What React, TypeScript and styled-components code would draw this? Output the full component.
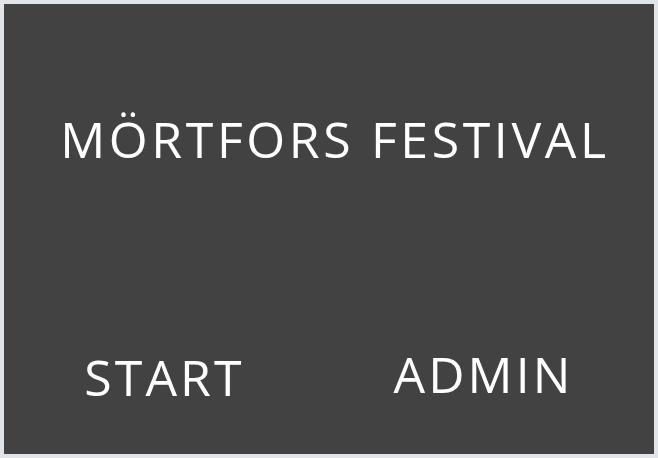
import styled, { createGlobalStyle } from "styled-components";

const GlobalStyle = createGlobalStyle`
  html, body {
    margin: 0;
    padding: 0;
    background: #e1e4e9;
  }
  body {
    padding: 4px;
    font-family: "Open Sans", "DejaVu Sans", sans-serif;
  }
`;

const Panel = styled.main`
  box-sizing: border-box;
  width: 650px;
  height: 450px;
  background: #424242;
  color: #ffffff;
  display: grid;
  grid-template-rows: 267px 1fr;
`;

const Title = styled.h1`
  margin: 0;
  padding-top: 105px;
  text-align: center;
  font-size: 50px;
  font-weight: 400;
  letter-spacing: 3.6px;
  line-height: 1.2;
  padding-left: 12px;
`;

const ButtonRow = styled.nav`
  display: grid;
  grid-template-columns: 1fr 1fr;
  align-items: start;
`;

const NavButton = styled.button<{ $offset?: number; $shift?: number }>`
  background: none;
  border: none;
  color: #ffffff;
  font-family: inherit;
  font-size: 50px;
  font-weight: 400;
  letter-spacing: 3.1px;
  line-height: 1.2;
  padding: 0 ${(p) => p.$shift ?? 0}px 0 0;
  margin-top: ${(p) => p.$offset ?? 0}px;
  cursor: pointer;
`;

export default function App() {
  return (
    <>
      <GlobalStyle />
      <Panel>
        <Title>MÖRTFORS FESTIVAL</Title>
        <ButtonRow>
          <NavButton $offset={76} $shift={4}>START</NavButton>
          <NavButton $offset={73} $shift={16}>ADMIN</NavButton>
        </ButtonRow>
      </Panel>
    </>
  );
}
